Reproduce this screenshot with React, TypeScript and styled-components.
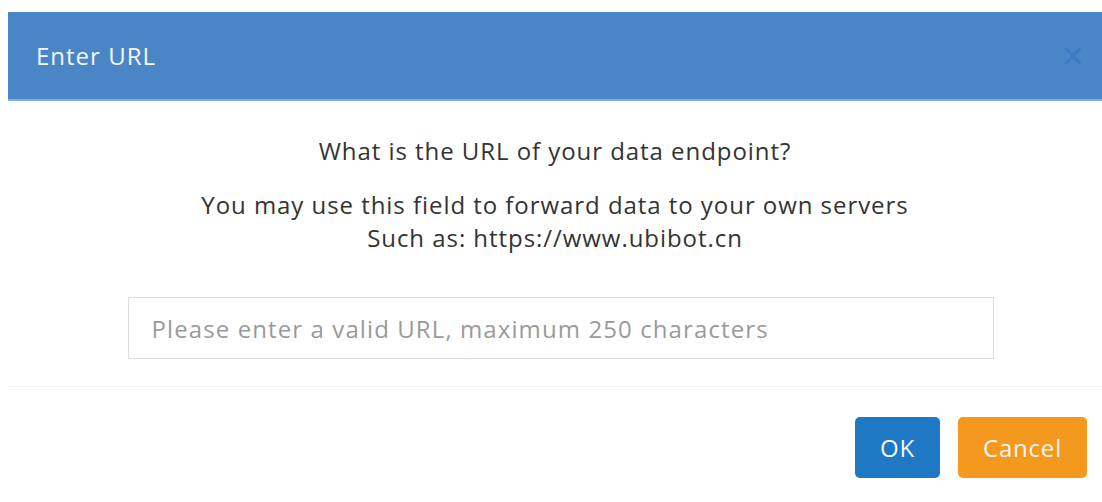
import React from "react";
import styled, { createGlobalStyle } from "styled-components";

const Global = createGlobalStyle`
  html, body { margin: 0; padding: 0; background: #ffffff; }
  body { font-family: "Open Sans", "Noto Sans", Arial, sans-serif; }
  * { box-sizing: border-box; }
`;

const Page = styled.div`
  padding: 12px 0 0 8px;
  width: 1102px;
  height: 502px;
  overflow: hidden;
`;

const Dialog = styled.div`
  width: 1094px;
  display: flex;
  flex-direction: column;
  background: #ffffff;
`;

const Header = styled.div`
  height: 89px;
  background: #4a86c5;
  border-bottom: 2px solid #7fb0e0;
  display: flex;
  align-items: center;
  justify-content: space-between;
  padding: 0 19px 0 28px;
`;

const Title = styled.h4`
  margin: 0;
  font-size: 24px;
  letter-spacing: 1px;
  font-weight: 400;
  color: #f2f6fb;
`;

const Close = styled.button`
  border: 0;
  background: transparent;
  padding: 0;
  width: 20px;
  height: 20px;
  display: flex;
  align-items: center;
  justify-content: center;
  cursor: pointer;
`;

const Body = styled.div`
  display: flex;
  flex-direction: column;
  align-items: center;
  padding: 34px 0 27px;
  border-bottom: 1px solid #f2f2f2;
`;

const Question = styled.p`
  margin: 0 0 21px;
  font-size: 24px;
  letter-spacing: 0.95px;
  line-height: 32px;
  color: #333333;
  text-align: center;
`;

const Hint = styled.p`
  margin: 0 0 43px;
  font-size: 24px;
  letter-spacing: 0.95px;
  line-height: 33px;
  color: #333333;
  text-align: center;
`;

const UrlInput = styled.input`
  width: 866px;
  height: 62px;
  margin-left: 11px;
  border: 1px solid #dcdcdc;
  padding: 0 23px;
  font-family: inherit;
  font-size: 24px;
  letter-spacing: 1.1px;
  color: #555555;
  outline: none;
  &::placeholder { color: #9a9a9a; }
`;

const Footer = styled.div`
  display: flex;
  justify-content: flex-end;
  gap: 18px;
  padding: 30px 15px 0 0;
`;

const Button = styled.button<{ $tone: "primary" | "warning"; $w: number }>`
  width: ${(p) => p.$w}px;
  height: 61px;
  border: 0;
  border-radius: 5px;
  font-family: inherit;
  font-size: 24px;
  letter-spacing: 0.8px;
  color: #f4f4f4;
  background: ${(p) => (p.$tone === "primary" ? "#1f78c3" : "#f3991d")};
  cursor: pointer;
`;

export default function App() {
  return (
    <>
      <Global />
      <Page>
        <Dialog>
          <Header>
            <Title>Enter URL</Title>
            <Close aria-label="Close">
              <svg width="18" height="18" viewBox="0 0 18 18">
                <path d="M2 2 L16 16 M16 2 L2 16" stroke="#3c7cc6" strokeWidth="3" strokeLinecap="round" />
              </svg>
            </Close>
          </Header>
          <Body>
            <Question>What is the URL of your data endpoint?</Question>
            <Hint>
              You may use this field to forward data to your own servers
              <br />
              Such as: https://www.ubibot.cn
            </Hint>
            <UrlInput placeholder="Please enter a valid URL, maximum 250 characters" />
          </Body>
          <Footer>
            <Button $tone="primary" $w={85}>OK</Button>
            <Button $tone="warning" $w={129}>Cancel</Button>
          </Footer>
        </Dialog>
      </Page>
    </>
  );
}
